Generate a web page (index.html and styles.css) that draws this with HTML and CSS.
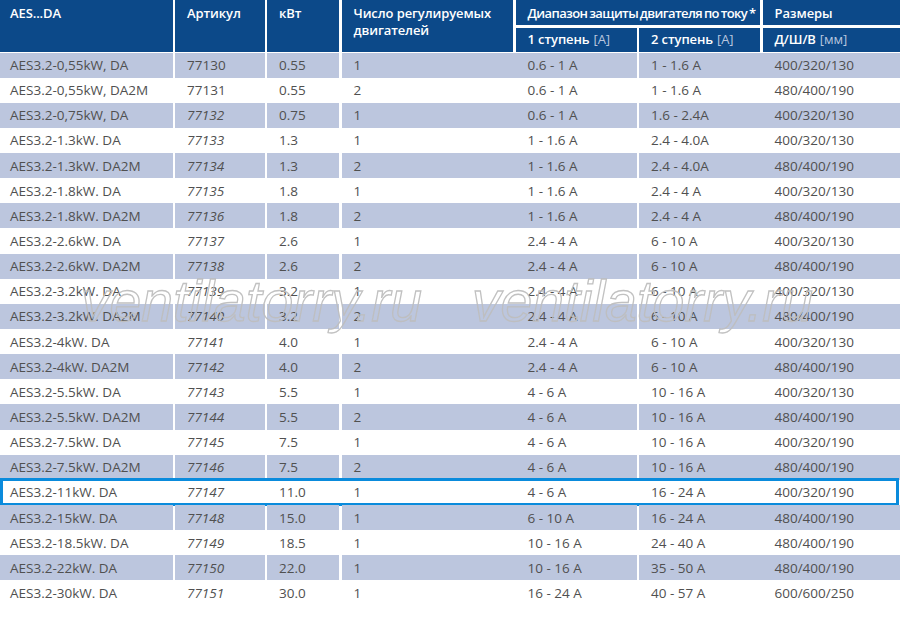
FILE: index.html
```html
<!DOCTYPE html>
<html lang="ru">
<head>
<meta charset="utf-8">
<title>AES...DA</title>
<link rel="stylesheet" href="styles.css">
</head>
<body>
<div class="sheet">
  <div class="head">
    <div class="h c1 span2">AES...DA</div>
    <div class="h c2 span2">Артикул</div>
    <div class="h c3 span2">кВт</div>
    <div class="h c4 span2">Число регулируемых<br>двигателей</div>
    <div class="h c56">Диапазон защиты двигателя по току *</div>
    <div class="h c7">Размеры</div>
    <div class="h sub c5">1 ступень <span class="unit">[A]</span></div>
    <div class="h sub c6">2 ступень <span class="unit">[A]</span></div>
    <div class="h sub c7">Д/Ш/В <span class="unit">[мм]</span></div>
  </div>
  <div class="body">
    <div class="row band"><div class="cell">AES3.2-0,55kW, DA</div><div class="cell">77130</div><div class="cell">0.55</div><div class="cell pair p45"><span>1</span><span>0.6 - 1 A</span></div><div class="cell pair p67"><span>1 - 1.6 A</span><span>400/320/130</span></div></div>
    <div class="row"><div class="cell">AES3.2-0,55kW, DA2M</div><div class="cell">77131</div><div class="cell">0.55</div><div class="cell pair p45"><span>2</span><span>0.6 - 1 A</span></div><div class="cell pair p67"><span>1 - 1.6 A</span><span>480/400/190</span></div></div>
    <div class="row band"><div class="cell">AES3.2-0,75kW, DA</div><div class="cell it">77132</div><div class="cell">0.75</div><div class="cell pair p45"><span>1</span><span>0.6 - 1 A</span></div><div class="cell pair p67"><span>1.6 - 2.4A</span><span>400/320/130</span></div></div>
    <div class="row"><div class="cell">AES3.2-1.3kW. DA</div><div class="cell it">77133</div><div class="cell">1.3</div><div class="cell pair p45"><span>1</span><span>1 - 1.6 A</span></div><div class="cell pair p67"><span>2.4 - 4.0A</span><span>400/320/130</span></div></div>
    <div class="row band"><div class="cell">AES3.2-1.3kW. DA2M</div><div class="cell it">77134</div><div class="cell">1.3</div><div class="cell pair p45"><span>2</span><span>1 - 1.6 A</span></div><div class="cell pair p67"><span>2.4 - 4.0A</span><span>480/400/190</span></div></div>
    <div class="row"><div class="cell">AES3.2-1.8kW. DA</div><div class="cell it">77135</div><div class="cell">1.8</div><div class="cell pair p45"><span>1</span><span>1 - 1.6 A</span></div><div class="cell pair p67"><span>2.4 - 4 A</span><span>400/320/130</span></div></div>
    <div class="row band"><div class="cell">AES3.2-1.8kW. DA2M</div><div class="cell it">77136</div><div class="cell">1.8</div><div class="cell pair p45"><span>2</span><span>1 - 1.6 A</span></div><div class="cell pair p67"><span>2.4 - 4 A</span><span>480/400/190</span></div></div>
    <div class="row"><div class="cell">AES3.2-2.6kW. DA</div><div class="cell it">77137</div><div class="cell">2.6</div><div class="cell pair p45"><span>1</span><span>2.4 - 4 A</span></div><div class="cell pair p67"><span>6 - 10 A</span><span>400/320/130</span></div></div>
    <div class="row band"><div class="cell">AES3.2-2.6kW. DA2M</div><div class="cell it">77138</div><div class="cell">2.6</div><div class="cell pair p45"><span>2</span><span>2.4 - 4 A</span></div><div class="cell pair p67"><span>6 - 10 A</span><span>480/400/190</span></div></div>
    <div class="row"><div class="cell">AES3.2-3.2kW. DA</div><div class="cell it">77139</div><div class="cell">3.2</div><div class="cell pair p45"><span>1</span><span>2.4 - 4 A</span></div><div class="cell pair p67"><span>6 - 10 A</span><span>400/320/130</span></div></div>
    <div class="row band"><div class="cell">AES3.2-3.2kW. DA2M</div><div class="cell it">77140</div><div class="cell">3.2</div><div class="cell pair p45"><span>2</span><span>2.4 - 4 A</span></div><div class="cell pair p67"><span>6 - 10 A</span><span>480/400/190</span></div></div>
    <div class="row"><div class="cell">AES3.2-4kW. DA</div><div class="cell it">77141</div><div class="cell">4.0</div><div class="cell pair p45"><span>1</span><span>2.4 - 4 A</span></div><div class="cell pair p67"><span>6 - 10 A</span><span>400/320/130</span></div></div>
    <div class="row band"><div class="cell">AES3.2-4kW. DA2M</div><div class="cell it">77142</div><div class="cell">4.0</div><div class="cell pair p45"><span>2</span><span>2.4 - 4 A</span></div><div class="cell pair p67"><span>6 - 10 A</span><span>480/400/190</span></div></div>
    <div class="row"><div class="cell">AES3.2-5.5kW. DA</div><div class="cell it">77143</div><div class="cell">5.5</div><div class="cell pair p45"><span>1</span><span>4 - 6 A</span></div><div class="cell pair p67"><span>10 - 16 A</span><span>400/320/130</span></div></div>
    <div class="row band"><div class="cell">AES3.2-5.5kW. DA2M</div><div class="cell it">77144</div><div class="cell">5.5</div><div class="cell pair p45"><span>2</span><span>4 - 6 A</span></div><div class="cell pair p67"><span>10 - 16 A</span><span>480/400/190</span></div></div>
    <div class="row"><div class="cell">AES3.2-7.5kW. DA</div><div class="cell it">77145</div><div class="cell">7.5</div><div class="cell pair p45"><span>1</span><span>4 - 6 A</span></div><div class="cell pair p67"><span>10 - 16 A</span><span>400/320/190</span></div></div>
    <div class="row band"><div class="cell">AES3.2-7.5kW. DA2M</div><div class="cell it">77146</div><div class="cell">7.5</div><div class="cell pair p45"><span>2</span><span>4 - 6 A</span></div><div class="cell pair p67"><span>10 - 16 A</span><span>480/400/190</span></div></div>
    <div class="row hl"><div class="cell">AES3.2-11kW. DA</div><div class="cell it">77147</div><div class="cell">11.0</div><div class="cell pair p45"><span>1</span><span>4 - 6 A</span></div><div class="cell pair p67"><span>16 - 24 A</span><span>400/320/190</span></div></div>
    <div class="row band"><div class="cell">AES3.2-15kW. DA</div><div class="cell it">77148</div><div class="cell">15.0</div><div class="cell pair p45"><span>1</span><span>6 - 10 A</span></div><div class="cell pair p67"><span>16 - 24 A</span><span>480/400/190</span></div></div>
    <div class="row"><div class="cell">AES3.2-18.5kW. DA</div><div class="cell it">77149</div><div class="cell">18.5</div><div class="cell pair p45"><span>1</span><span>10 - 16 A</span></div><div class="cell pair p67"><span>24 - 40 A</span><span>480/400/190</span></div></div>
    <div class="row band"><div class="cell">AES3.2-22kW. DA</div><div class="cell it">77150</div><div class="cell">22.0</div><div class="cell pair p45"><span>1</span><span>10 - 16 A</span></div><div class="cell pair p67"><span>35 - 50 A</span><span>480/400/190</span></div></div>
    <div class="row"><div class="cell">AES3.2-30kW. DA</div><div class="cell it">77151</div><div class="cell">30.0</div><div class="cell pair p45"><span>1</span><span>16 - 24 A</span></div><div class="cell pair p67"><span>40 - 57 A</span><span>600/600/250</span></div></div>
  </div>
  <div class="mark m1">ventilatorry.ru</div>
  <div class="mark m2">ventilatorry.ru</div>
</div>
</body>
</html>
```
FILE: styles.css
```css
html, body {
  margin: 0;
  padding: 0;
  background: #ffffff;
}
.sheet {
  position: relative;
  width: 900px;
  height: 618px;
  overflow: hidden;
  font-family: "Open Sans", "Noto Sans", sans-serif;
  font-size: 13.5px;
  color: #505050;
}
.head {
  display: grid;
  grid-template-columns: 172.5px 89.5px 72px 171.5px 121px 121px 137.5px;
  grid-template-rows: 25px 24px;
  gap: 2.5px;
}
.h {
  background: #0c4989;
  color: #ffffff;
  font-size: 13px;
  font-weight: 600;
  letter-spacing: -0.1px;
  line-height: 17px;
  padding: 5px 0 0 12px;
  white-space: nowrap;
}
.h.c1 { grid-column: 1; padding-left: 10px; }
.h.c2 { grid-column: 2; }
.h.c3 { grid-column: 3; }
.h.c4 { grid-column: 4; }
.h.c56 {
  grid-column: 5 / span 2;
  grid-row: 1;
  letter-spacing: -0.6px;
  word-spacing: -1px;
}
.h.c7 { grid-column: 7; }
.h.c5 { grid-column: 5; }
.h.c6 { grid-column: 6; }
.span2 { grid-row: 1 / span 2; }
.h.sub {
  grid-row: 2;
  padding-top: 0;
  display: flex;
  align-items: center;
}
.unit {
  font-weight: 400;
  color: #b9c6df;
  margin-left: 4px;
}
.body {
  margin-top: 1px;
}
.row {
  display: grid;
  grid-template-columns: 172.5px 89.5px 72px 295px 261px;
  column-gap: 2.5px;
  height: 25.15px;
  position: relative;
}
.cell {
  display: flex;
  align-items: center;
  padding-left: 12px;
  white-space: nowrap;
}
.cell:first-child { padding-left: 10px; }
.band .cell { background: #bcc6de; }
.it { font-style: italic; }
.pair { padding-left: 0; }
.pair span { padding-left: 12px; }
.p45 span:first-child { width: 162px; }
.p67 span:first-child { width: 111.5px; }
.hl::after {
  content: "";
  position: absolute;
  left: 0;
  right: 1px;
  top: -2px;
  bottom: -1px;
  border: 3px solid #0a8bdc;
  pointer-events: none;
}
.mark {
  position: absolute;
  top: 270px;
  font-family: "Liberation Sans", Arial, sans-serif;
  font-style: italic;
  font-size: 57px;
  line-height: 62px;
  color: transparent;
  -webkit-text-stroke: 1.3px rgba(190, 190, 190, 0.95);
  white-space: nowrap;
  pointer-events: none;
}
.m1 { left: 81px; }
.m2 { left: 472px; }
```
